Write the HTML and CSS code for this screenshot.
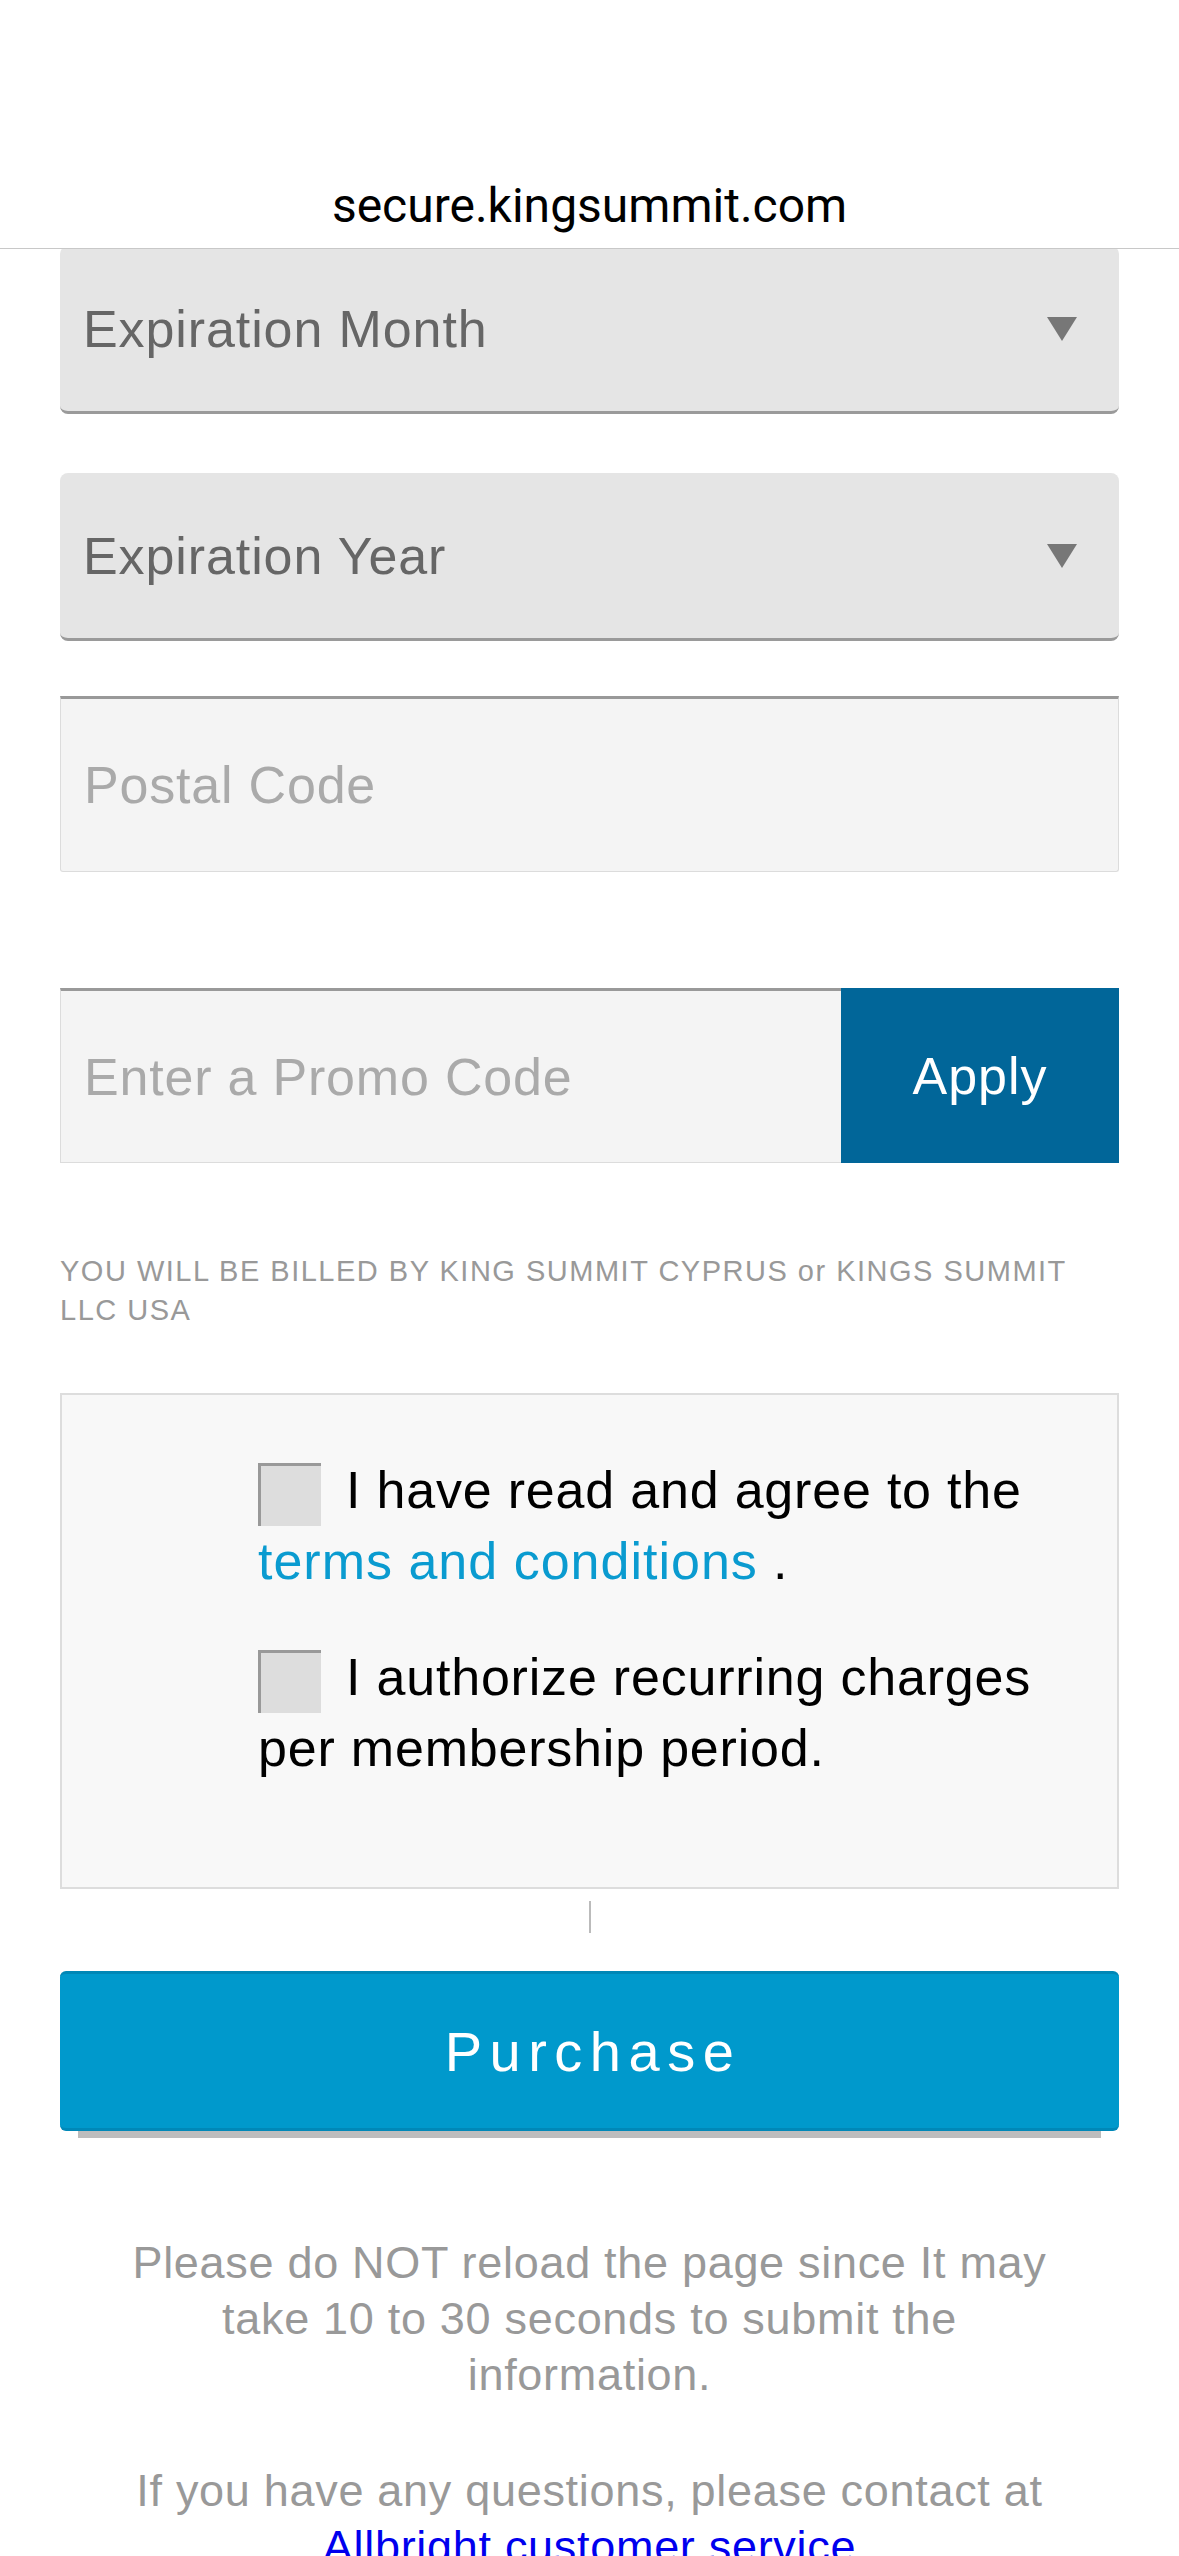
FILE: index.html
```html
<!DOCTYPE html>
<html lang="en">
<head>
    <meta charset="UTF-8">
    <meta name="viewport" content="width=device-width, initial-scale=1.0">
    <title>Checkout</title>
    <link rel="stylesheet" href="styles.css">
</head>
<body>
    <header class="url-bar">
        <span class="url-text">secure.kingsummit.com</span>
    </header>

    <div class="page">
        <form class="checkout-form" onsubmit="return false;">
            <!-- Kartu: bulan & tahun kedaluwarsa -->
            <div class="select-box">
                <span class="select-label">Expiration Month</span>
                <svg class="select-arrow" viewBox="0 0 30 24"><polygon points="0,0 30,0 15,24"/></svg>
            </div>

            <div class="select-box select-year">
                <span class="select-label">Expiration Year</span>
                <svg class="select-arrow" viewBox="0 0 30 24"><polygon points="0,0 30,0 15,24"/></svg>
            </div>

            <input type="text" class="text-field postal-field" placeholder="Postal Code">

            <div class="promo-row">
                <input type="text" class="text-field promo-field" placeholder="Enter a Promo Code">
                <button type="button" class="apply-btn">Apply</button>
            </div>

            <p class="billing-note">YOU WILL BE BILLED BY KING SUMMIT CYPRUS or KINGS SUMMIT LLC USA</p>

            <div class="agree-box">
                <label class="agree-item">
                    <input type="checkbox" class="check">I have read and agree to the <a href="#" class="terms-link">terms and conditions</a> .
                </label>
                <label class="agree-item">
                    <input type="checkbox" class="check">I authorize recurring charges per membership period.
                </label>
            </div>

            <div class="divider"></div>

            <button type="submit" class="purchase-btn">Purchase</button>

            <div class="notes">
                <p>Please do NOT reload the page since It may take 10 to 30 seconds to submit the information.</p>
                <p class="contact">If you have any questions, please contact at <a href="#" class="support-link">Allbright customer service</a></p>
            </div>
        </form>
    </div>
</body>
</html>
```

FILE: styles.css
```css
/* Global */
body {
    margin: 0;
    padding: 0;
    background: #fff;
    font-family: "Liberation Sans", Arial, sans-serif;
    color: #000;
}

/* Address bar */
.url-bar {
    height: 248px;
    border-bottom: 1px solid #c8c8c8;
    display: flex;
    align-items: flex-end;
    justify-content: center;
}

.url-text {
    font-family: Roboto, "Liberation Sans", sans-serif;
    font-size: 48px;
    line-height: 56px;
    padding-bottom: 14px;
    color: #000;
}

.page {
    overflow: hidden;
}

.checkout-form {
    margin-top: -3px;
    padding: 0 60px;
}

/* Select boxes */
.select-box {
    height: 168px;
    box-sizing: border-box;
    background: #e5e5e5;
    border-bottom: 3px solid #9a9a9a;
    border-radius: 8px;
    display: flex;
    align-items: center;
    justify-content: space-between;
    padding: 0 42px 0 23px;
}

.select-year {
    margin-top: 59px;
}

.select-label {
    font-size: 52px;
    letter-spacing: 0.9px;
    color: #666;
}

.select-arrow {
    width: 30px;
    height: 24px;
    fill: #777;
}

/* Text inputs */
.text-field {
    display: block;
    box-sizing: border-box;
    margin: 0;
    background: #f4f4f4;
    border: 1px solid #dcdcdc;
    border-top: 3px solid #999;
    font-family: "Liberation Sans", Arial, sans-serif;
    font-size: 52px;
    letter-spacing: 0.8px;
    color: #333;
    padding: 0 0 0 23px;
    outline: none;
}

.text-field::placeholder {
    color: #aaa;
}

.postal-field {
    width: 100%;
    height: 176px;
    margin-top: 55px;
    border-radius: 0 0 3px 3px;
}

.promo-row {
    display: flex;
    height: 175px;
    margin-top: 116px;
}

.promo-field {
    flex: 1;
    height: 100%;
    border-right: none;
}

.apply-btn {
    width: 278px;
    height: 100%;
    border: none;
    border-radius: 0;
    background: #016699;
    color: #fff;
    font-family: "Liberation Sans", Arial, sans-serif;
    font-size: 52px;
    letter-spacing: 1px;
    cursor: pointer;
}

/* Billing note */
.billing-note {
    margin: 89px 30px 0 0;
    font-size: 29px;
    line-height: 39px;
    letter-spacing: 1.5px;
    color: #999;
}

/* Agreement checkboxes */
.agree-box {
    margin-top: 63px;
    border: 2px solid #ddd;
    background: #f8f8f8;
    padding: 60px 40px 103px 196px;
}

.agree-item {
    display: block;
    font-size: 52px;
    line-height: 71px;
    letter-spacing: 0.8px;
    color: #000;
}

.agree-item + .agree-item {
    margin-top: 45px;
}

.check {
    appearance: none;
    -webkit-appearance: none;
    display: inline-block;
    box-sizing: border-box;
    width: 63px;
    height: 63px;
    margin: 0 25px 0 0;
    vertical-align: middle;
    background: #ddd;
    border: none;
    border-top: 3px solid #999;
    border-left: 3px solid #999;
    border-radius: 0;
}

.terms-link {
    color: #0a9bd0;
    text-decoration: none;
    letter-spacing: 1px;
}

.divider {
    width: 2px;
    height: 32px;
    margin: 12px auto 0;
    background: #bbb;
}

/* Purchase button */
.purchase-btn {
    display: block;
    width: 100%;
    height: 160px;
    margin-top: 38px;
    background: #0099cc;
    border: none;
    border-top: 3px solid #0087b6;
    border-bottom: 3px solid #0088b8;
    border-radius: 6px;
    color: #fff;
    font-family: "Liberation Sans", Arial, sans-serif;
    font-size: 56px;
    letter-spacing: 7.5px;
    padding: 0 0 0 7px;
    box-shadow: 0 25px 0 -18px #bdbdbd;
    cursor: pointer;
}

/* Footer notes */
.notes {
    margin-top: 104px;
    padding: 0 55px;
    text-align: center;
    font-size: 45px;
    line-height: 56px;
    letter-spacing: 0.7px;
    color: #999;
}

.notes p {
    margin: 0;
}

.notes .contact {
    margin-top: 60px;
}

.support-link {
    color: #0000ee;
}
```
